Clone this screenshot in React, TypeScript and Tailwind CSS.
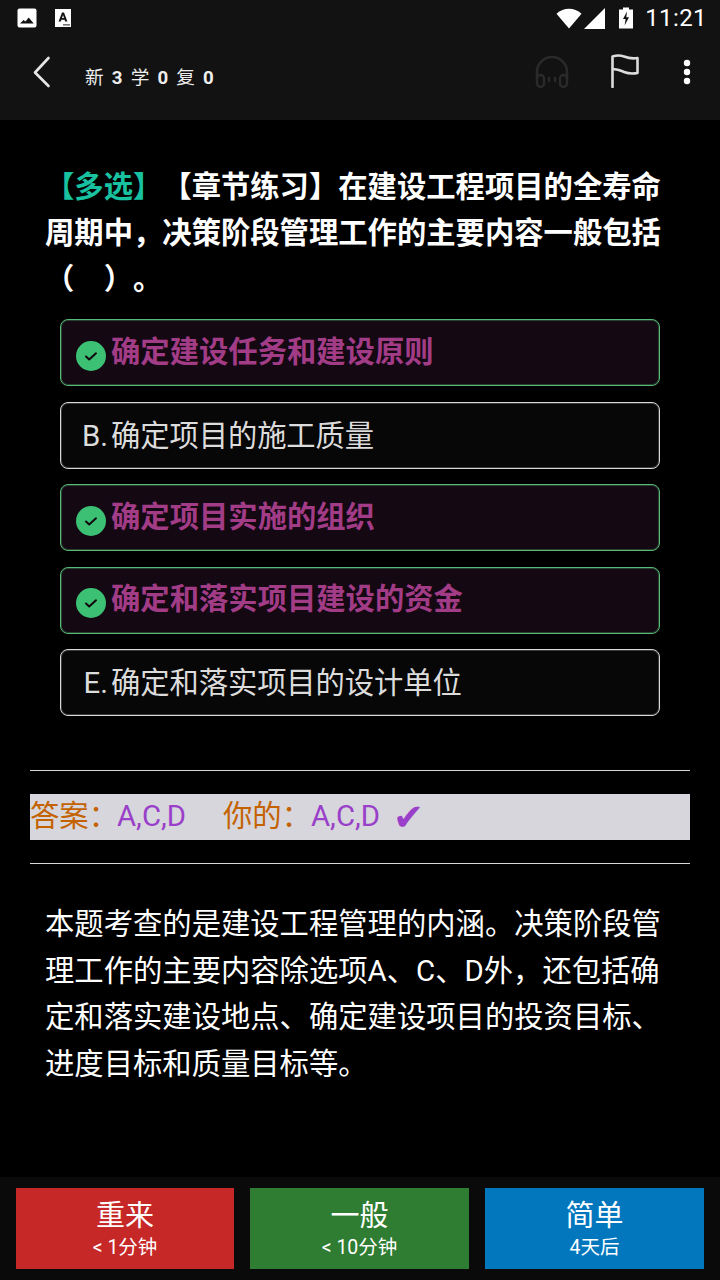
import React from "react";

const font = { fontFamily: '"Roboto","Noto Sans CJK SC",sans-serif' };

function Check() {
  return (
    <svg width="30" height="30" viewBox="0 0 30 30" className="shrink-0 mt-[6px]">
      <circle cx="15" cy="15" r="15" fill="#3cc073" />
      <path d="M10 15.5l3.2 3 6.8-6.2" fill="none" stroke="#12080f" strokeWidth="2" strokeLinecap="round" strokeLinejoin="round" />
    </svg>
  );
}

function Correct({ text }: { text: string }) {
  return (
    <div className="h-[67px] rounded-[8px] border border-[#58bb75] shadow-[inset_0_0_0_1px_#58bb7550] bg-[#140812] flex items-center pl-[15px]">
      <Check />
      <span className="ml-[5px] text-[29.33px] font-bold text-[#a23c87] leading-none">{text}</span>
    </div>
  );
}

function Plain({ label, text }: { label: string; text: string }) {
  return (
    <div className="h-[67px] rounded-[8px] border border-[#d8d8d8] shadow-[inset_0_0_0_1px_#d8d8d840] bg-[#070707] flex items-center pt-[3px] text-[#dcdcdc] text-[29.33px] leading-none">
      <span className="w-[50px] text-right pr-[3px] shrink-0">{label}</span>
      <span className="tracking-[-0.1px]">{text}</span>
    </div>
  );
}

function Btn({ bg, a, b, w }: { bg: string; a: string; b: string; w: string }) {
  return (
    <div className={`${w} h-[81px] ${bg} flex flex-col items-center justify-center text-white`}>
      <div className="text-[29px] leading-[40px] -mt-[2px]">{a}</div>
      <div className="text-[19.5px] leading-[24px]">{b}</div>
    </div>
  );
}

export default function App() {
  return (
    <div style={font} className="w-[720px] h-[1280px] bg-black flex flex-col overflow-hidden text-white [text-spacing-trim:space-all]">
      <div className="h-[120px] bg-[#121212] flex flex-col shrink-0">
        <div className="h-[36px] flex items-center pl-[17px] pr-[13px] shrink-0">
          <svg width="20" height="20" viewBox="0 0 20 20">
            <rect x="0.5" y="0.5" width="19" height="19" rx="2" fill="#fff" />
            <path d="M3 15.5l3.5-3.5 2 1.6 3.2-4.2 5 6.1z" fill="#121212" />
          </svg>
          <svg width="16" height="18" viewBox="0 0 16 18" className="ml-[18px]">
            <rect width="16" height="18" fill="#fff" />
            <path d="M3.6 12.5L7 3.5h2l3.4 9h-2.2l-.6-1.8H6.4l-.6 1.8zM7 9h2L8 6z" fill="#121212" fillRule="evenodd" />
            <rect x="8" y="15" width="7" height="1.6" fill="#777" />
          </svg>
          <div className="ml-auto flex items-center">
            <svg width="26" height="21" viewBox="0 0 27 21"><path d="M0.5 5.5C8 -1.3 19 -1.3 26.5 5.5L13.5 21z" fill="#fff" /></svg>
            <svg width="21" height="21" viewBox="0 0 21 21" className="ml-[2px]"><path d="M21 0v21H0z" fill="#fff" /></svg>
            <svg width="14" height="22" viewBox="0 0 14 21" className="ml-[14px]">
              <path d="M4 0h6v2h4v19H0V2h4z" fill="#fff" />
              <path d="M8 4L4 11.5h2.6L5.6 18 10 9.8H7.3z" fill="#121212" />
            </svg>
            <span className="ml-[12px] text-[24px] leading-none tracking-[0.4px] text-white">11:21</span>
          </div>
        </div>
        <div className="flex-1 flex items-start">
          <svg width="20" height="32" viewBox="0 0 20 32" className="ml-[32px] mt-[20px] shrink-0">
            <path d="M16.5 2L3 16.5 16.5 30" fill="none" stroke="#e6e6e6" strokeWidth="2.6" strokeLinecap="round" strokeLinejoin="round" />
          </svg>
          <span className="ml-[33px] mt-[30px] text-[18.67px] leading-[24px] tracking-[1.75px] text-[#eeeeee] whitespace-pre">新 <b>3</b> 学 <b>0</b> 复 <b>0</b></span>
          <div className="ml-auto flex items-start">
            <svg width="34" height="34" viewBox="0 0 34 34" className="mt-[19px]">
              <path d="M2 24V17a15 15 0 0 1 30 0v7" fill="none" stroke="#2a2a2a" strokeWidth="2.6" />
              <rect x="2" y="20" width="7" height="12" rx="3.5" fill="none" stroke="#2a2a2a" strokeWidth="2.4" />
              <rect x="25" y="20" width="7" height="12" rx="3.5" fill="none" stroke="#2a2a2a" strokeWidth="2.4" />
              <path d="M14 23v3M20 23v3" stroke="#2a2a2a" strokeWidth="2.4" strokeLinecap="round" />
            </svg>
            <svg width="30" height="34" viewBox="0 0 30 34" className="ml-[41px] mt-[18px]">
              <path d="M2.5 33V2.5C7 1 10 1 14 2.5s8 2.5 13.5 1.5v15c-5 1-9.5 .5-13.5-1S7 14.5 2.5 15.5" fill="none" stroke="#dcdcdc" strokeWidth="2.6" strokeLinecap="round" strokeLinejoin="round" />
            </svg>
            <svg width="8" height="26" viewBox="0 0 8 26" className="ml-[43px] mr-[29px] mt-[23px]">
              <circle cx="4" cy="4" r="3.2" fill="#fff" /><circle cx="4" cy="13" r="3.2" fill="#fff" /><circle cx="4" cy="22" r="3.2" fill="#fff" />
            </svg>
          </div>
        </div>
      </div>

      <div className="flex-1 flex flex-col">
        <div className="pt-[44px] px-[45px] text-[29.33px] leading-[46px] font-bold text-white">
          <div className="whitespace-pre"><span className="text-[#18c2a0]">【多选】</span>【章节练习】在建设工程项目的全寿命</div>
          <div>周期中，决策阶段管理工作的主要内容一般包括</div>
          <div className="whitespace-pre">（　）。</div>
        </div>

        <div className="mt-[17px] mx-[60px] flex flex-col gap-[15.5px]">
          <Correct text="确定建设任务和建设原则" />
          <Plain label="B." text="确定项目的施工质量" />
          <Correct text="确定项目实施的组织" />
          <Correct text="确定和落实项目建设的资金" />
          <Plain label="E." text="确定和落实项目的设计单位" />
        </div>

        <div className="mt-[54px] mx-[30px] h-[1px] bg-[#d8d8d8]" />
        <div className="mt-[23px] mx-[30px] h-[46px] bg-[#d6d6dc] flex items-center text-[29.33px] leading-none whitespace-pre">
          <span className="text-[#c46200]">答案：</span>
          <span className="text-[#9a3fc9] -ml-[1px]">A,C,D</span>
          <span className="text-[#c46200] ml-[37px]">你的：</span>
          <span className="text-[#9a3fc9]">A,C,D</span>
          <span className="text-[#9a3fc9] ml-[13px] text-[37px] font-bold" style={{ fontFamily: '"DejaVu Sans",sans-serif' }}>✔</span>
        </div>
        <div className="mt-[23px] mx-[30px] h-[1px] bg-[#d8d8d8]" />

        <div className="mt-[37px] px-[45px] text-[29.33px] leading-[46.5px] text-white">
          <div>本题考查的是建设工程管理的内涵。决策阶段管</div>
          <div>理工作的主要内容除选项A、C、D外，还包括确</div>
          <div>定和落实建设地点、确定建设项目的投资目标、</div>
          <div>进度目标和质量目标等。</div>
        </div>
      </div>

      <div className="h-[103px] shrink-0 bg-[#0a0a0a] pt-[11px] px-[16px] flex gap-[16px] items-start">
        <Btn w="w-[218px]" bg="bg-[#c62828]" a="重来" b="< 1分钟" />
        <Btn w="w-[219px]" bg="bg-[#2e7d32]" a="一般" b="< 10分钟" />
        <Btn w="w-[219px]" bg="bg-[#0277bd]" a="简单" b="4天后" />
      </div>
    </div>
  );
}
